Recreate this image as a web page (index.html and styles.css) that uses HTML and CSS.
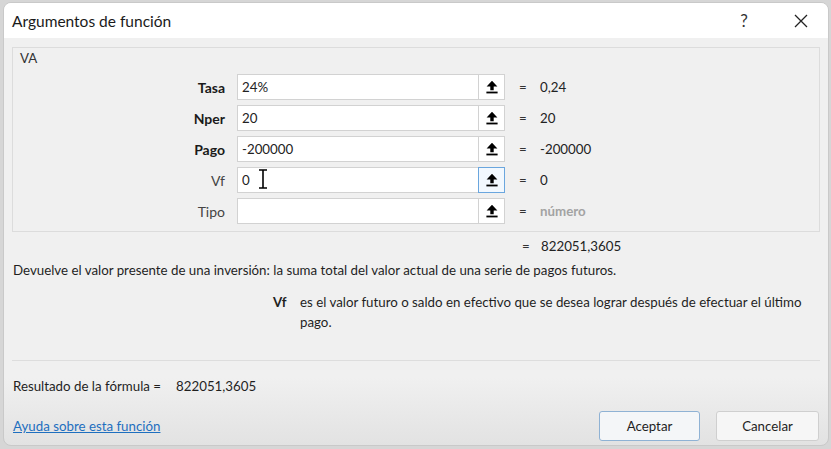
FILE: index.html
```html
<!DOCTYPE html>
<html lang="es">
<head>
<meta charset="utf-8">
<title>Argumentos de función</title>
<link rel="stylesheet" href="styles.css">
</head>
<body>
<div class="dialog">
  <div class="titlebar">
    <div class="title">Argumentos de función</div>
    <div class="tb-btn help">?</div>
    <div class="tb-btn close">
      <svg width="14" height="14" viewBox="0 0 14 14"><path d="M1 1 L13 13 M13 1 L1 13" stroke="#222" stroke-width="1.3" fill="none"/></svg>
    </div>
  </div>
  <div class="content">
    <div class="group">
      <div class="group-label">VA</div>
      <div class="args">
        <div class="arg-label req">Tasa</div>
        <div class="field"><div class="input">24%</div><div class="ref"><svg class="ico" viewBox="0 0 12 14"><path d="M6 0.8 L11.4 6.6 H7.7 V10.3 H4.3 V6.6 H0.6 Z"/><rect x="0.4" y="11.6" width="11.2" height="1.8"/></svg></div></div>
        <div class="eq">=</div>
        <div class="val">0,24</div>

        <div class="arg-label req">Nper</div>
        <div class="field"><div class="input">20</div><div class="ref"><svg class="ico" viewBox="0 0 12 14"><path d="M6 0.8 L11.4 6.6 H7.7 V10.3 H4.3 V6.6 H0.6 Z"/><rect x="0.4" y="11.6" width="11.2" height="1.8"/></svg></div></div>
        <div class="eq">=</div>
        <div class="val">20</div>

        <div class="arg-label req">Pago</div>
        <div class="field"><div class="input">-200000</div><div class="ref"><svg class="ico" viewBox="0 0 12 14"><path d="M6 0.8 L11.4 6.6 H7.7 V10.3 H4.3 V6.6 H0.6 Z"/><rect x="0.4" y="11.6" width="11.2" height="1.8"/></svg></div></div>
        <div class="eq">=</div>
        <div class="val">-200000</div>

        <div class="arg-label">Vf</div>
        <div class="field"><div class="input">0</div><div class="ref focus"><svg class="ico" viewBox="0 0 12 14"><path d="M6 0.8 L11.4 6.6 H7.7 V10.3 H4.3 V6.6 H0.6 Z"/><rect x="0.4" y="11.6" width="11.2" height="1.8"/></svg></div>
          <svg class="ibeam" width="12" height="22" viewBox="0 0 12 22"><path d="M2 2 H10 M6 2 V20 M2 20 H10" stroke="#fff" stroke-width="3.4" fill="none"/><path d="M2 2 H10 M6 2 V20 M2 20 H10" stroke="#000" stroke-width="1.6" fill="none"/></svg>
        </div>
        <div class="eq">=</div>
        <div class="val">0</div>

        <div class="arg-label">Tipo</div>
        <div class="field"><div class="input"></div><div class="ref"><svg class="ico" viewBox="0 0 12 14"><path d="M6 0.8 L11.4 6.6 H7.7 V10.3 H4.3 V6.6 H0.6 Z"/><rect x="0.4" y="11.6" width="11.2" height="1.8"/></svg></div></div>
        <div class="eq">=</div>
        <div class="val hint">número</div>
      </div>
    </div>
    <div class="result-row"><span class="r-eq">=</span><span class="val">822051,3605</span></div>
    <div class="desc">Devuelve el valor presente de una inversión: la suma total del valor actual de una serie de pagos futuros.</div>
    <div class="arg-help">
      <div class="ah-name">Vf</div>
      <div class="ah-text">es el valor futuro o saldo en efectivo que se desea lograr después de efectuar el último pago.</div>
    </div>
    <div class="sep"></div>
    <div class="formula">Resultado de la fórmula =<span class="fval">822051,3605</span></div>
    <div class="footer">
      <a class="link" href="#">Ayuda sobre esta función</a>
      <div class="buttons">
        <div class="btn default">Aceptar</div>
        <div class="btn wide">Cancelar</div>
      </div>
    </div>
  </div>
</div>
</body>
</html>
```
FILE: styles.css
```css
html, body {
  margin: 0;
  padding: 0;
}
body {
  width: 831px;
  height: 449px;
  overflow: hidden;
  background: #d6d6d6;
  font-family: Lato, "Open Sans", sans-serif;
  font-size: 13.3px;
  color: #1f1f1f;
}
.dialog {
  box-sizing: border-box;
  margin: 2px 2px 0 3px;
  width: 826px;
  height: 444px;
  border: 1px solid #c9c9c9;
  border-radius: 8px;
  overflow: hidden;
  background: linear-gradient(#f0f0f0 0, #f0f0f0 375px, #e2e2e2 443px);
  display: flex;
  flex-direction: column;
}
.titlebar {
  height: 35px;
  flex: none;
  background: #ffffff;
  display: flex;
  align-items: center;
  padding-left: 8px;
}
.title {
  flex: 1;
  font-size: 15.5px;
  color: #1a1a1a;
}
.tb-btn {
  display: flex;
  align-items: center;
  justify-content: center;
  height: 35px;
}
.help {
  width: 20px;
  font-size: 17px;
  color: #333;
  margin-right: 37px;
}
.close {
  width: 20px;
  margin-right: 17px;
}
.content {
  flex: 1;
  display: flex;
  flex-direction: column;
  padding: 9px 8px 0 8px;
}
.group {
  height: 185px;
  box-sizing: border-box;
  border: 1px solid #dcdcdc;
  padding: 2px 0 0 0;
}
.group-label {
  padding-left: 7px;
  line-height: 16px;
  color: #333;
}
.args {
  margin-top: 8px;
  display: grid;
  grid-template-columns: 213px 279px 35px 1fr;
  grid-auto-rows: 26px;
  row-gap: 5px;
  align-items: center;
}
.arg-label {
  text-align: right;
  padding-right: 1px;
  color: #444;
  font-size: 14px;
}
.arg-label.req {
  font-weight: bold;
  color: #1a1a1a;
}
.field {
  display: flex;
  height: 26px;
  margin-left: 11px;
  position: relative;
}
.input {
  flex: 1;
  box-sizing: border-box;
  background: #fff;
  border: 1px solid #d2d2d2;
  border-right: none;
  padding-left: 4px;
  line-height: 24px;
  color: #222;
}
.ref {
  width: 27px;
  box-sizing: border-box;
  background: #fff;
  border: 1px solid #d2d2d2;
  display: flex;
  align-items: center;
  justify-content: center;
}
.ref.focus {
  border: 1px solid #6aa6de;
  background: #f2f8fe;
}
.ico {
  width: 12px;
  height: 14px;
  fill: #000;
}
.ibeam {
  position: absolute;
  left: 20px;
  top: 1px;
}
.eq {
  padding-left: 14px;
  color: #333;
}
.val {
  color: #222;
}
.val.hint {
  font-weight: bold;
  color: #a3a3a3;
}
.result-row {
  margin-top: 6px;
  line-height: 16px;
  display: flex;
  padding-left: 510px;
}
.r-eq {
  width: 12px;
  margin-right: 7px;
  color: #333;
}
.desc {
  margin-top: 8px;
  line-height: 16px;
  padding-left: 1px;
}
.arg-help {
  margin-top: 14px;
  display: flex;
  padding-left: 261px;
  line-height: 20px;
}
.ah-name {
  font-weight: bold;
  width: 27px;
  flex: none;
}
.ah-text {
  width: 510px;
}
.sep {
  margin-top: 28px;
  height: 1px;
  background: #dddddd;
}
.formula {
  margin-top: 17px;
  line-height: 16px;
  padding-left: 1px;
}
.fval {
  margin-left: 15px;
}
.footer {
  margin-top: 17px;
  display: flex;
  align-items: center;
  justify-content: space-between;
}
.link {
  color: #1e6fbf;
  text-decoration: underline;
  padding-left: 1px;
}
.buttons {
  display: flex;
  gap: 16px;
  margin-right: 1px;
}
.btn {
  width: 101px;
  height: 30px;
  box-sizing: border-box;
  border: 1px solid #cfcfcf;
  border-radius: 3px;
  background: #f6f6f6;
  display: flex;
  align-items: center;
  justify-content: center;
  color: #1f1f1f;
}
.btn.default {
  border-color: #8fb2d4;
  background: #f4f6f8;
}
.btn.wide {
  width: 103px;
}
```
